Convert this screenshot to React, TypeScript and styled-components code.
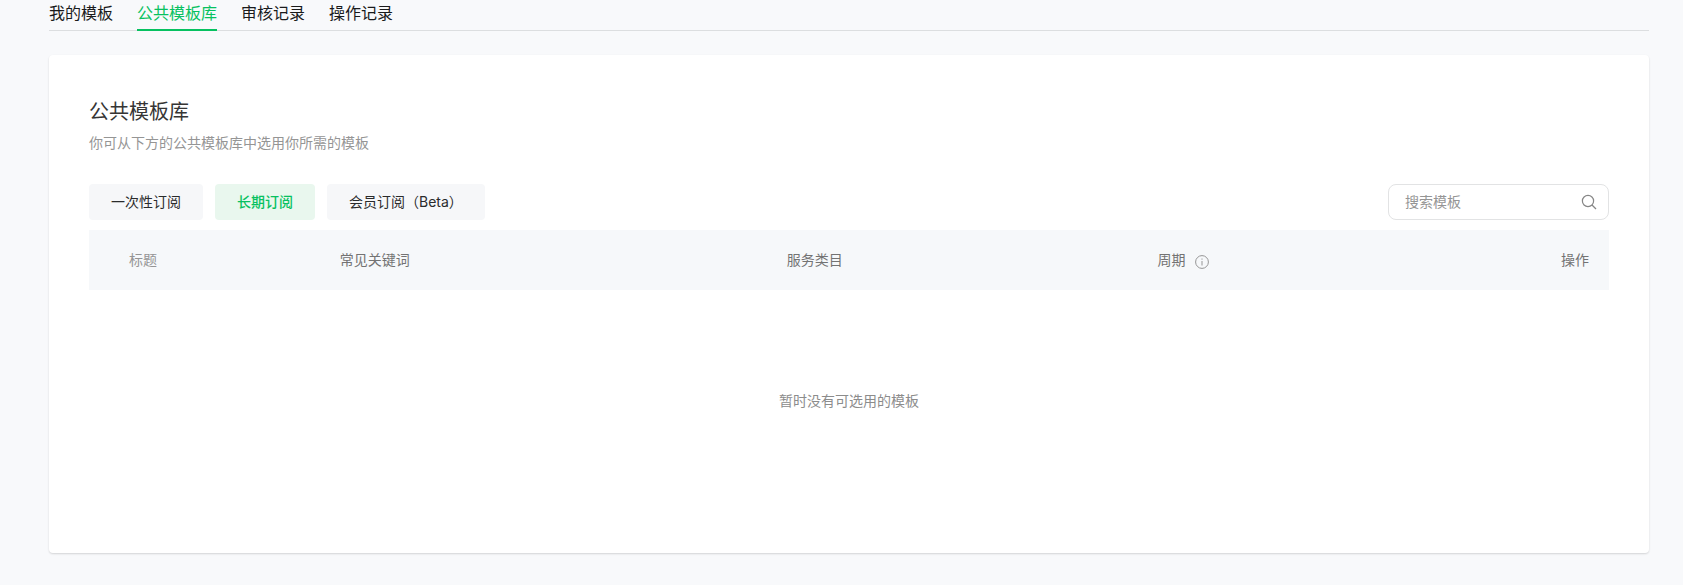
import React from 'react';
import styled, { createGlobalStyle } from 'styled-components';

const Global = createGlobalStyle`
  * { box-sizing: border-box; }
  body { margin: 0; background: #f8f9fb; color: #353535; font-family: Inter, "Noto Sans CJK SC", sans-serif; font-size: 14px; line-height: 22px; }
  h1, p { margin: 0; }
  button, input { font: inherit; color: inherit; }
`;
const Page = styled.main`padding: 0 34px 30px 49px;`;
const Tabs = styled.nav`display: flex; gap: 24px; border-bottom: 1px solid #dcdee0;`;
const Tab = styled.a<{ $active?: boolean }>`
  height: 31px; margin-bottom: -1px; line-height: 26px; font-size: 16px; text-decoration: none;
  color: ${p => (p.$active ? '#07c160' : '#1a1b1c')};
  border-bottom: 2px solid ${p => (p.$active ? '#07c160' : 'transparent')};
`;
const Card = styled.section`
  margin-top: 24px; padding: 40px; background: #fff; border-radius: 4px; box-shadow: 0 1px 2px rgba(0, 0, 0, 0.15);
`;
const Title = styled.h1`font-size: 20px; line-height: 34px; font-weight: 400;`;
const Subtitle = styled.p`margin-top: 3px; color: #959595;`;
const Toolbar = styled.div`display: flex; gap: 12px; margin-top: 30px;`;
const Filter = styled.button<{ $active?: boolean }>`
  height: 36px; padding: 0 22px; border: 0; border-radius: 4px; cursor: pointer;
  background: ${p => (p.$active ? '#e9f7ee' : '#f6f7f9')};
  color: ${p => (p.$active ? '#07c160' : '#2a2b2c')};
  font-weight: ${p => (p.$active ? 500 : 400)};
`;
const Search = styled.label`
  display: flex; align-items: center; width: 221px; height: 36px; margin-left: auto; padding: 0 11px 0 16px;
  border: 1px solid #e2e3e4; border-radius: 8px;
`;
const SearchInput = styled.input`
  flex: 1; min-width: 0; padding: 0; border: 0; outline: 0; background: none;
  &::placeholder { color: #959595; opacity: 1; }
`;
const Table = styled.table`width: 100%; margin-top: 10px; border-collapse: collapse; table-layout: fixed;`;
const Head = styled.th<{ $align?: string; $width?: string }>`
  width: ${p => p.$width || 'auto'}; height: 60px; padding: 0 20px 0 0; background: #f6f8fa; color: #737373;
  font-weight: 400; text-align: ${p => p.$align || 'left'};
  &:first-child { padding-left: 40px; color: #959595; }
`;
const HeadIcon = styled.svg`margin-left: 9px; vertical-align: -4px;`;
const Empty = styled.td`height: 223px; padding: 0 0 2px; text-align: center; color: #8c8c8c;`;

export default function App() {
  return (
    <>
      <Global />
      <Page>
        <Tabs>
          <Tab href="#mine">我的模板</Tab>
          <Tab href="#public" $active>公共模板库</Tab>
          <Tab href="#review">审核记录</Tab>
          <Tab href="#logs">操作记录</Tab>
        </Tabs>
        <Card>
          <Title>公共模板库</Title>
          <Subtitle>你可从下方的公共模板库中选用你所需的模板</Subtitle>
          <Toolbar>
            <Filter>一次性订阅</Filter>
            <Filter $active>长期订阅</Filter>
            <Filter>会员订阅（Beta）</Filter>
            <Search>
              <SearchInput aria-label="搜索模板" placeholder="搜索模板" />
              <svg width="16" height="16" viewBox="0 0 16 16" fill="none" stroke="#868686" strokeWidth="1.2">
                <circle cx="7" cy="7" r="5.6" /><path d="M11 11l4 4" />
              </svg>
            </Search>
          </Toolbar>
          <Table>
            <thead>
              <tr>
                <Head $width="16.5%">标题</Head>
                <Head $width="29.4%">常见关键词</Head>
                <Head $width="24.4%">服务类目</Head>
                <Head $width="13.7%">
                  周期
                  <HeadIcon width="14" height="14" viewBox="0 0 14 14" fill="none" stroke="#969696">
                    <circle cx="7" cy="7" r="6.4" /><path d="M7 6v4.5M7 3.5v1.2" />
                  </HeadIcon>
                </Head>
                <Head $align="right">操作</Head>
              </tr>
            </thead>
            <tbody><tr><Empty colSpan={5}>暂时没有可选用的模板</Empty></tr></tbody>
          </Table>
        </Card>
      </Page>
    </>
  );
}
